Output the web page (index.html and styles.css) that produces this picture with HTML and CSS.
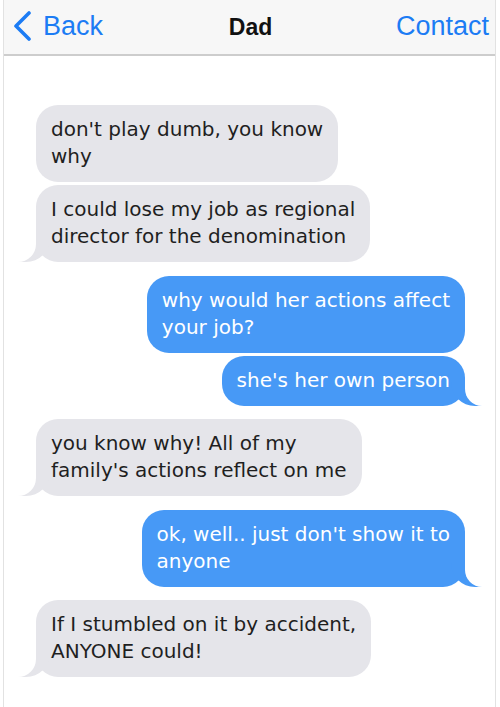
FILE: index.html
```html
<!DOCTYPE html>
<html>
<head>
<meta charset="utf-8">
<link rel="stylesheet" href="styles.css">
</head>
<body>
<div class="phone">
  <header class="nav">
    <div class="nav-back">
      <svg class="chevron" width="20" height="30" viewBox="0 0 20 30"><polyline points="17,2 4,15 17,28" fill="none" stroke="#1c7cf4" stroke-width="3.6" stroke-linecap="round" stroke-linejoin="round"/></svg>
      <span>Back</span>
    </div>
    <div class="nav-title">Dad</div>
    <div class="nav-contact">Contact</div>
  </header>
  <main class="thread">
    <div class="bubble them">don't play dumb, you know<br>why</div>
    <div class="bubble them tail same">I could lose my job as regional<br>director for the denomination</div>
    <div class="bubble me">why would her actions affect<br>your job?</div>
    <div class="bubble me tail same">she's her own person</div>
    <div class="bubble them tail">you know why! All of my<br>family's actions reflect on me</div>
    <div class="bubble me tail">ok, well.. just don't show it to<br>anyone</div>
    <div class="bubble them tail">If I stumbled on it by accident,<br>ANYONE could!</div>
  </main>
</div>
</body>
</html>
```
FILE: styles.css
```css
html, body {
  margin: 0;
  padding: 0;
  background: #ffffff;
}
body {
  width: 500px;
  height: 707px;
  overflow: hidden;
}
.phone {
  margin-left: 3px;
  width: 493px;
  box-sizing: border-box;
  min-height: 707px;
  border-left: 1px solid #e2e2e2;
  border-right: 1px solid #e2e2e2;
}
.nav {
  height: 54px;
  background: #f7f7f7;
  border-bottom: 2px solid #cdcdcd;
  display: grid;
  grid-template-columns: 1fr auto 1fr;
  align-items: center;
  padding: 0 6px 0 8px;
  font-family: "Liberation Sans", Arial, sans-serif;
}
.nav-back {
  display: flex;
  align-items: center;
  gap: 11px;
  color: #1c7cf4;
  font-size: 27px;
  margin-top: -2px;
}
.chevron {
  display: block;
}
.nav-title {
  font-weight: bold;
  font-size: 23px;
  color: #111;
}
.nav-contact {
  justify-self: end;
  color: #1c7cf4;
  font-size: 27px;
  margin-top: -2px;
}
.thread {
  display: flex;
  flex-direction: column;
  padding: 49px 30px 0 32px;
  font-family: "DejaVu Sans", Verdana, sans-serif;
  font-size: 20px;
  line-height: 27px;
}
.bubble {
  position: relative;
  padding: 11px 15px 12px 15px;
  border-radius: 22px;
  white-space: nowrap;
  margin-top: 13.5px;
}
.bubble:first-child {
  margin-top: 0;
}
.bubble.same {
  margin-top: 3px;
}
.them {
  align-self: flex-start;
  background: #e5e5ea;
  color: #1f1f1f;
}
.me {
  align-self: flex-end;
  background: #4799f6;
  color: #ffffff;
}
.tail::before,
.tail::after {
  content: "";
  position: absolute;
  bottom: 0;
  height: 26px;
}
.them.tail::before {
  left: -22px;
  width: 36px;
  background: #e5e5ea;
  border-bottom-right-radius: 24px;
}
.them.tail::after {
  left: -30px;
  width: 30px;
  background: #ffffff;
  border-bottom-right-radius: 18px;
}
.me.tail::before {
  right: -20px;
  width: 34px;
  background: #4799f6;
  border-bottom-left-radius: 24px;
}
.me.tail::after {
  right: -28px;
  width: 28px;
  background: #ffffff;
  border-bottom-left-radius: 17px;
}
```
